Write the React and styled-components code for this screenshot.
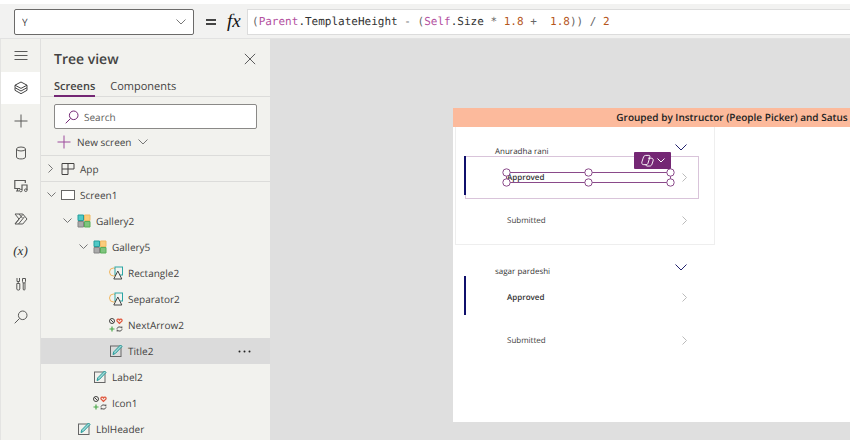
import React from "react";
import styled, { createGlobalStyle } from "styled-components";

const Global = createGlobalStyle`
  * { box-sizing: border-box; }
  html, body, #root { height: 100%; }
  body { margin: 0; background: #dfdfdf; color: #444342; font-family: "Open Sans", "Noto Sans", sans-serif; font-size: 10px; text-rendering: geometricPrecision; }
  button, input, select { font: inherit; color: inherit; margin: 0; padding: 0; border: 0; background: none; border-radius: 0; text-rendering: inherit; }
  h1, h2, p { margin: 0; font-weight: 400; }
  svg { display: block; flex: none; }
`;

const Page = styled.div`
  height: 100vh;
  display: flex;
  flex-direction: column;
  overflow: hidden;
`;

const FormulaBar = styled.header`
  display: flex;
  align-items: center;
  height: 39px;
  flex: none;
  padding-top: 2px;
  padding-left: 14px;
  border-top: 4px solid #fff;
  border-bottom: 1px solid #e2e2e2;
  background: #f2f2f1;
`;

const PropertyBox = styled.label`
  position: relative;
  width: 180px;
  height: 26px;
`;

const PropertySelect = styled.select`
  appearance: none;
  width: 100%;
  height: 100%;
  padding-left: 7px;
  border: 1px solid #6b6a69;
  border-radius: 2px;
  background: #fff;
`;

const SelectArrow = styled.span`
  position: absolute;
  right: 8px;
  top: 10px;
  pointer-events: none;
`;

const Equals = styled.span`
  width: 33px;
  display: flex;
  justify-content: center;
`;

const Fx = styled.span`
  width: 20px;
  font: italic 400 19px "Liberation Serif", serif;
  line-height: 20px;
  color: #111;
`;

const Formula = styled.code`
  flex: 1;
  height: 26px;
  padding-left: 4px;
  border: 1px solid #dcdcdc;
  border-right: 0;
  background: #fff;
  font: 11px "DejaVu Sans Mono", monospace;
  line-height: 24px;
  white-space: pre;
  color: #333;
`;

const tokenColors = { object: "#b3519f", number: "#b5561b", symbol: "#666" };

const Token = styled.span`
  color: ${(p) => tokenColors[p.$kind]};
`;

const Workspace = styled.div`
  flex: 1;
  min-height: 0;
  display: grid;
  grid-template-columns: 41px 229px minmax(0, 1fr);
`;

const Rail = styled.nav`
  border-left: 1px solid #e4e4e2;
  border-right: 1px solid #e0e0de;
  background: #f2f2ee;
`;

const RailButtons = styled.div`
  display: grid;
  grid-template-rows: repeat(9, 1fr);
  height: 294px;
`;

const RailButton = styled.button`
  display: grid;
  place-items: center;
  color: #5a5a58;
  background: ${(p) => (p.$active ? "#fff" : "transparent")};
`;

const Variable = styled.span`
  font: italic 13px "Liberation Serif", serif;
  color: #333;
`;

const Panel = styled.aside`
  background: #f2f2ee;
  overflow: hidden;
`;

const PanelHead = styled.div`
  display: flex;
  align-items: center;
  justify-content: space-between;
  height: 40px;
  padding: 0 14px 0 13px;
`;

const PanelTitle = styled.h1`
  font-size: 14px;
  font-weight: 600;
`;

const IconButton = styled.button`
  display: flex;
  color: #444;
`;

const Tabs = styled.div`
  display: flex;
  gap: 15px;
  height: 18px;
  padding-left: 13px;
  border-bottom: 1px solid #dcdcda;
`;

const Tab = styled.button`
  height: 18px;
  font-size: 11px;
  line-height: 16px;
  font-weight: ${(p) => (p.$active ? 600 : 400)};
  border-bottom: 2px solid ${(p) => (p.$active ? "#742774" : "transparent")};
`;

const SearchBox = styled.label`
  display: flex;
  align-items: center;
  gap: 5px;
  height: 25px;
  margin: 7px 13px 0;
  padding-left: 10px;
  border: 1px solid #8a8987;
  border-radius: 2px;
  background: #fff;
  color: #742774;
`;

const SearchInput = styled.input`
  flex: 1;
  min-width: 0;
  outline: 0;
  &::placeholder { color: #605e5c; opacity: 1; }
`;

const NewScreen = styled.button`
  display: flex;
  align-items: center;
  gap: 6px;
  height: 26px;
  padding-left: 16px;
`;

const Tree = styled.ul`
  margin: 0;
  padding: 0;
  list-style: none;
`;

const TreeItem = styled.li`
  display: flex;
  align-items: center;
  height: ${(p) => (p.$tall ? 27 : 26)}px;
  padding-left: ${(p) => 5 + p.$level * 16}px;
  padding-right: 19px;
  background: ${(p) => (p.$selected ? "#dbdbdb" : "transparent")};
  border-top: ${(p) => (p.$ruled ? "1px solid #dcdcda" : "0")};
`;

const TreeButton = styled.button`
  display: flex;
  align-items: center;
  flex: 1;
  gap: 5px;
`;

const Slot = styled.span`
  display: grid;
  place-items: center;
  width: ${(p) => p.$width}px;
`;

const Canvas = styled.main`
  padding: 69px 0 0 183px;
  overflow: hidden;
  background: #dfdfdf;
`;

const Artboard = styled.section`
  width: 558px;
  height: 314px;
  background: #fff;
`;

const Banner = styled.h2`
  height: 19px;
  background: #fcba9c;
  color: #222;
  font-size: 10px;
  line-height: 19px;
  font-weight: 600;
  text-align: center;
`;

const Group = styled.article`
  width: 260px;
  height: 118px;
  margin: 0 0 2px 2px;
  padding: 0 15px 0 9px;
  border: 1px solid ${(p) => (p.$outlined ? "#eeeeee" : "transparent")};
  border-top: 0;
`;

const GroupHead = styled.div`
  display: flex;
  justify-content: space-between;
  height: 29px;
  padding: 17px 12px 0 30px;
  font-size: 8px;
  color: #333;
`;

const GroupName = styled.span`
  padding-top: 2px;
  line-height: 12px;
`;

const Entry = styled.div`
  position: relative;
  display: flex;
  align-items: center;
  justify-content: space-between;
  height: ${(p) => (p.$marked ? 43 : 42)}px;
  padding: 0 12px 0 42px;
  outline: ${(p) => (p.$selected ? "1px solid #d9c4da" : "0")};
  outline-offset: -1px;
  font-size: 8px;
  font-weight: ${(p) => (p.$marked ? 600 : 400)};
  color: ${(p) => (p.$marked ? "#333" : "#444")};
`;

const Marker = styled.span`
  position: absolute;
  left: -1px;
  top: 0;
  width: 2px;
  height: 39px;
  background: #10106c;
`;

const Selection = styled.svg`
  position: absolute;
  left: 36px;
  top: 11px;
`;

const CopilotButton = styled.button`
  position: absolute;
  right: 28px;
  top: -4px;
  display: flex;
  align-items: center;
  justify-content: center;
  gap: 3px;
  width: 37px;
  height: 17px;
  border-radius: 1px;
  background: #742774;
  color: #fff;
`;

const Chevron = ({ w = 10, dir = "down", color = "#777" }) => {
  const h = w / 2;
  return dir === "down" ? (
    <svg width={w} height={h + 1} viewBox={`0 0 ${w} ${h + 1}`} fill="none" stroke={color}><path d={`M.5 .5 L${w / 2} ${h} L${w - 0.5} .5`} /></svg>
  ) : (
    <svg width={h + 1} height={w} viewBox={`0 0 ${h + 1} ${w}`} fill="none" stroke={color}><path d={`M.5 .5 L${h} ${w / 2} L.5 ${w - 0.5}`} /></svg>
  );
};

const Svg = ({ size = 14, children, ...rest }) => (
  <svg width={size} height={size} viewBox="0 0 14 14" fill="none" stroke="currentColor" {...rest}>{children}</svg>
);

const Magnifier = () => <Svg><circle cx="8.7" cy="5.3" r="4.3" /><path d="M5.6 8.4 L.7 13.3" /></Svg>;
const Plus = ({ color }) => <Svg stroke={color || "currentColor"}><path d="M7 .5V13.5M.5 7H13.5" /></Svg>;

const railItems = [
  ["Menu", <Svg><path d="M.5 3.5h13M.5 7.5h13M.5 11.5h13" /></Svg>],
  ["Tree view", <Svg strokeLinejoin="round" stroke="#444"><path d="M7 1 L13 4.2 7 7.4 1 4.2ZM1 4.2v2.5L7 10l6-3.3V4.2M1 6.7v2.6L7 12.700l6-3.400V6.700" /></Svg>],
  ["Insert", <Plus />],
  ["Data", <Svg><ellipse cx="7" cy="3" rx="4.5" ry="2" /><path d="M2.5 3v8c0 2.6 9 2.6 9 0V3" /></Svg>],
  ["Media", <Svg><path d="M6 9.5H.8v-8h10.500V4M2 12h3M3.500 9.500v2.500M8 11V6h5v5" strokeWidth="1.2" /><circle cx="6.8" cy="11.5" r="1.3" /><circle cx="11.8" cy="11.2" r="1.3" /></Svg>],
  ["Power Automate", <Svg strokeLinejoin="round"><path d="M1 2h7.800l4.200 5-4.200 5H1l4-5ZM5 2l3.500 4.200M1 12 8.800 2.500M4.500 12l6-7.300" /></Svg>],
  ["Variables", <Variable>(x)</Variable>],
  ["Advanced tools", <Svg><path d="M3 1v3.500h2.500V1M4.200 4.500v2M2.800 6.500h3v5.500c0 1.500-3 1.500-3 0ZM8.500 1.500h3v3l-.7 1.500H9.200l-.7-1.500ZM9.200 6v6c0 1.500 1.800 1.500 1.800 0V6" /></Svg>],
  ["Search", <Magnifier />],
];

const icons = {
  app: <Svg><path d="M1 1.500h12v5.500H1ZM7 1.500v11M1 7v5.500h6" /></Svg>,
  screen: <Svg stroke="#666"><rect x=".5" y="2.5" width="13" height="9" fill="#fff" /></Svg>,
  gallery: (
    <Svg><path fill="#4fc9c6" stroke="#269e9c" d="M1 1h5.500v5.500H1z" /><path fill="#fbcd7c" stroke="#efb965" d="M7.500 1H13v5.500H7.500z" /><path fill="#aaa" stroke="#858585" d="M1 7.500h5.500V13H1z" /><path fill="#7fc47e" stroke="#5aae59" d="M7.500 7.500H13V13H7.500z" /></Svg>
  ),
  shape: (
    <Svg><circle cx="4.5" cy="6" r="4" stroke="#f0b45a" /><rect x="6" y="1" width="7.5" height="8" stroke="#2aa5a4" fill="#f2f2ee" /><path d="M8.800 5 L12.800 13H4.800Z" stroke="#444" fill="#f2f2ee" /></Svg>
  ),
  iconset: (
    <Svg><circle cx="3" cy="3" r="2.5" /><path d="m1.300 1.300 3.400 3.400" /><path stroke="#e0563c" strokeWidth="1.2" d="M10.500 5.500 8 3c-.500-2 1.800-2.500 2.500-1 .7-1.500 3-1 2.500 1Z" /><path stroke="#4aa84a" strokeWidth="1.2" d="M3 8.500v5M.5 11h5" /><path d="M8 10.700c.3-2 3.700-2.400 4.800-.5V8.500M13 11.300c-.3 2-3.700 2.400-4.800.5v1.700" /></Svg>
  ),
  label: (
    <Svg><rect x="1.5" y="2" width="10.5" height="10.5" stroke="#666" /><path d="M4 10.500 4.800 7.800 11.500 1l1.500 1.500-6.700 7Z" stroke="#219a98" fill="#9fd8d6" /></Svg>
  ),
};

const tree = [
  { name: "App", level: 0, icon: "app", open: false, ruled: true },
  { name: "Screen1", level: 0, icon: "screen", open: true, ruled: true, tall: true },
  { name: "Gallery2", level: 1, icon: "gallery", open: true },
  { name: "Gallery5", level: 2, icon: "gallery", open: true },
  { name: "Rectangle2", level: 3, icon: "shape" },
  { name: "Separator2", level: 3, icon: "shape" },
  { name: "NextArrow2", level: 3, icon: "iconset" },
  { name: "Title2", level: 3, icon: "label", selected: true },
  { name: "Label2", level: 2, icon: "label" },
  { name: "Icon1", level: 2, icon: "iconset" },
  { name: "LblHeader", level: 1, icon: "label" },
];

const Handles = () => (
  <Selection width="174" height="21" viewBox="0 0 174 21" fill="#fff" stroke="#8a4a8a">
    <path d="M5.500 5.500H169.500V15.500H5.500Z" fill="none" />
    {[5.5, 87.5, 169.5].map((x) => [5.5, 15.5].map((y) => <circle key={`${x}-${y}`} cx={x} cy={y} r="3.7" />))}
  </Selection>
);

const Copilot = () => (
  <Svg size={13}><path d="M5 1.500h3.500c1.500 0 1.200 1.500.8 2.700L7.500 10c-.4 1.200-1 1.500-2 1.500H3C1 11.500.5 10 1 8.500l1.300-4C3 2.500 3.500 1.500 5 1.500ZM7.500 4.500H11c2 0 2.500 1.500 2 3l-1.200 3.500c-.6 1.700-1.500 2-3 2H6.500c-1 0-1.300-1-.8-2.200" /></Svg>
);

const groups = [
  { name: "Anuradha rani", active: true },
  { name: "sagar pardeshi", active: false },
];

export default function App() {
  return (
    <Page>
      <Global />
      <FormulaBar>
        <PropertyBox>
          <PropertySelect aria-label="Property" defaultValue="Y"><option>Y</option></PropertySelect>
          <SelectArrow><Chevron w={10} /></SelectArrow>
        </PropertyBox>
        <Equals><svg width="10" height="7" viewBox="0 0 10 7" stroke="#444" strokeWidth="2"><path d="M0 1h10M0 5h10" /></svg></Equals>
        <Fx>fx</Fx>
        <Formula>
          <Token $kind="symbol">(</Token><Token $kind="object">Parent</Token>.TemplateHeight<Token $kind="symbol"> - (</Token><Token $kind="object">Self</Token>.Size<Token $kind="symbol"> * </Token><Token $kind="number">1.8</Token><Token $kind="symbol">{" +  "}</Token><Token $kind="number">1.8</Token><Token $kind="symbol">)) / </Token><Token $kind="number">2</Token>
        </Formula>
      </FormulaBar>
      <Workspace>
        <Rail>
          <RailButtons>
            {railItems.map(([label, icon]) => (
              <RailButton key={label} aria-label={label} $active={label === "Tree view"}>{icon}</RailButton>
            ))}
          </RailButtons>
        </Rail>
        <Panel>
          <PanelHead>
            <PanelTitle>Tree view</PanelTitle>
            <IconButton aria-label="Close"><Svg size={12}><path d="M1 1 13 13M13 1 1 13" /></Svg></IconButton>
          </PanelHead>
          <Tabs role="tablist">
            <Tab role="tab" aria-selected="true" $active>Screens</Tab>
            <Tab role="tab" aria-selected="false">Components</Tab>
          </Tabs>
          <SearchBox>
            <Magnifier />
            <SearchInput type="text" aria-label="Search" placeholder="Search" />
          </SearchBox>
          <NewScreen><Plus color="#9c4a9c" />New screen<Chevron w={10} /></NewScreen>
          <Tree>
            {tree.map((t) => (
              <TreeItem key={t.name} $level={t.level} $selected={t.selected} $ruled={t.ruled} $tall={t.tall}>
                <TreeButton>
                  <Slot $width={10}>{t.open !== undefined && <Chevron w={9} dir={t.open ? "down" : "right"} />}</Slot>
                  <Slot $width={14}>{icons[t.icon]}</Slot>
                  {t.name}
                </TreeButton>
                {t.selected && (
                  <IconButton aria-label="More actions"><svg width="13" height="3" viewBox="0 0 13 3" fill="#222"><circle cx="1.5" cy="1.5" r="1" /><circle cx="6.5" cy="1.5" r="1" /><circle cx="11.5" cy="1.5" r="1" /></svg></IconButton>
                )}
              </TreeItem>
            ))}
          </Tree>
        </Panel>
        <Canvas>
          <Artboard>
            <Banner>Grouped by Instructor (People Picker) and Satus</Banner>
            {groups.map((g) => (
              <Group key={g.name} $outlined={g.active}>
                <GroupHead>
                  <GroupName>{g.name}</GroupName>
                  <IconButton aria-label={`Collapse ${g.name}`}><Chevron w={12} color="#22226e" /></IconButton>
                </GroupHead>
                <Entry $selected={g.active} $marked>
                  <Marker />
                  Approved
                  <Chevron w={9} dir="right" color="#bbb" />
                  {g.active && <Handles />}
                  {g.active && <CopilotButton aria-label="Copilot"><Copilot /><Chevron w={8} color="#fff" /></CopilotButton>}
                </Entry>
                <Entry>
                  Submitted
                  <Chevron w={9} dir="right" color="#bbb" />
                </Entry>
              </Group>
            ))}
          </Artboard>
        </Canvas>
      </Workspace>
    </Page>
  );
}
